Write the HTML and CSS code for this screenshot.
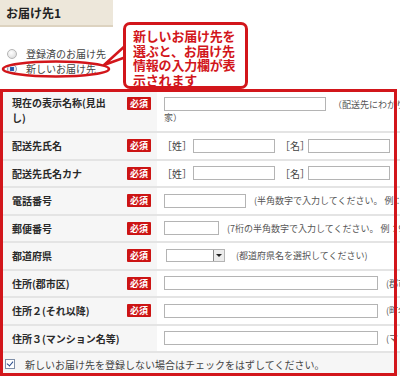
FILE: index.html
```html
<!DOCTYPE html>
<html lang="ja">
<head>
<meta charset="utf-8">
<link rel="stylesheet" href="styles.css">
</head>
<body>
<div class="page">
  <div class="sec-title">お届け先1</div>
  <ul class="choices">
    <li><span class="radio"></span>登録済のお届け先</li>
    <li><span class="radio on"></span>新しいお届け先</li>
  </ul>

  <div class="form">
    <div class="row r1">
      <div class="lab"><span class="ltxt">現在の表示名称(見出<br>し)</span><span class="req">必須</span></div>
      <div class="val val-wrap">
        <div class="line"><span class="inp w162"></span><span class="hint">（配送先にわかりやすい名称をつけてください。例：実</span></div>
        <div class="line hint">家）</div>
      </div>
    </div>
    <div class="row">
      <div class="lab"><span class="ltxt">配送先氏名</span><span class="req">必須</span></div>
      <div class="val"><span class="br">［姓］</span><span class="inp w82"></span><span class="br br2">［名］</span><span class="inp w82"></span></div>
    </div>
    <div class="row">
      <div class="lab"><span class="ltxt">配送先氏名カナ</span><span class="req">必須</span></div>
      <div class="val"><span class="br">［姓］</span><span class="inp w82"></span><span class="br br2">［名］</span><span class="inp w82"></span></div>
    </div>
    <div class="row">
      <div class="lab"><span class="ltxt">電話番号</span><span class="req">必須</span></div>
      <div class="val"><span class="inp w82"></span><span class="hint">(半角数字で入力してください。 例：0312345678)</span></div>
    </div>
    <div class="row">
      <div class="lab"><span class="ltxt">郵便番号</span><span class="req">必須</span></div>
      <div class="val"><span class="inp w55"></span><span class="hint">(7桁の半角数字で入力してください。 例：9999999)</span></div>
    </div>
    <div class="row">
      <div class="lab"><span class="ltxt">都道府県</span><span class="req">必須</span></div>
      <div class="val"><span class="sel"><span class="arrow"></span></span><span class="hint">(都道府県名を選択してください)</span></div>
    </div>
    <div class="row">
      <div class="lab"><span class="ltxt">住所(郡市区)</span><span class="req">必須</span></div>
      <div class="val"><span class="inp w214"></span><span class="hint">(郡市区)</span></div>
    </div>
    <div class="row">
      <div class="lab"><span class="ltxt">住所２(それ以降)</span><span class="req">必須</span></div>
      <div class="val"><span class="inp w214"></span><span class="hint">(町名)</span></div>
    </div>
    <div class="row">
      <div class="lab"><span class="ltxt">住所３(マンション名等)</span></div>
      <div class="val"><span class="inp w214"></span><span class="hint">(マ</span></div>
    </div>
    <div class="foot"><span class="check"></span>新しいお届け先を登録しない場合はチェックをはずしてください。</div>
  </div>

  <svg class="marks" width="400" height="379" viewBox="0 0 400 379">
    <ellipse cx="56" cy="69" rx="53" ry="7.5" fill="none" stroke="#d2161b" stroke-width="2.5"/>
    <polygon points="126,45 104,65 126,57" fill="#fff" stroke="#d2161b" stroke-width="2.5" stroke-linejoin="round"/>
  </svg>
  <div class="callout">新しいお届け先を<br>選ぶと、お届け先<br>情報の入力欄が表<br>示されます</div>
  <div class="redbox"></div>
</div>
</body>
</html>
```

FILE: styles.css
```css
html, body {
  margin: 0;
  padding: 0;
  background: #fff;
}
body {
  font-family: "Noto Sans CJK JP", "Noto Sans", sans-serif;
  color: #333;
  width: 400px;
  height: 379px;
  overflow: hidden;
}
.page {
  position: relative;
  width: 400px;
  height: 379px;
  overflow: hidden;
}
.sec-title {
  width: 107px;
  height: 25px;
  padding-left: 6px;
  background: #ede7da;
  border-bottom: 2px solid #ddd3c0;
  font-size: 12px;
  font-weight: bold;
  line-height: 25px;
  color: #222;
}
.choices {
  list-style: none;
  margin: 19px 0 0;
  padding: 0;
}
.choices li {
  display: flex;
  align-items: center;
  height: 15px;
  font-size: 10px;
  color: #444;
}
.radio {
  width: 8px;
  height: 8px;
  margin: 0 9px 0 7px;
  border-radius: 50%;
  border: 1px solid #b5b5b5;
  background: radial-gradient(circle at 40% 35%, #fff 0%, #e6e6e6 60%, #cfcfcf 100%);
  box-sizing: content-box;
  flex: none;
}
.radio.on {
  background: radial-gradient(circle, #1f4f9a 0%, #2d62b6 38%, #e8eef6 45%, #dde4ee 100%);
  border-color: #8a9bb5;
}
.form {
  margin-top: 15px;
  width: 470px;
}
.row {
  display: flex;
  height: 25.5px;
  border-bottom: 2px solid #e4e4e4;
}
.row.r1 {
  height: 40px;
}
.lab {
  flex: none;
  width: 139px;
  padding-left: 12px;
  padding-right: 6px;
  background: #f6f6f6;
  display: flex;
  align-items: center;
  justify-content: space-between;
  font-size: 10px;
  line-height: 15px;
  color: #2a2a2a;
  font-weight: bold;
}
.ltxt {
  white-space: nowrap;
}
.r1 .lab {
  align-items: flex-start;
  padding-top: 4px;
}
.req {
  background: #cc1414;
  color: #fff;
  font-size: 9px;
  font-weight: bold;
  width: 24px;
  height: 13px;
  line-height: 13px;
  text-align: center;
  border-radius: 1px;
  flex: none;
}
.r1 .req {
  margin-top: 2px;
}
.val {
  flex: 1;
  display: flex;
  align-items: center;
  padding-left: 7px;
  background: #fff;
  white-space: nowrap;
}
.val-wrap {
  flex-direction: column;
  align-items: flex-start;
  justify-content: flex-start;
  padding-top: 6px;
}
.line {
  display: flex;
  align-items: center;
  height: 14px;
}
.line.hint {
  margin-left: 0;
  height: 14px;
  line-height: 14px;
}
.inp {
  display: inline-block;
  height: 14px;
  border: 1px solid #b4b4b4;
  box-sizing: border-box;
  background: #fff;
  flex: none;
}
.w162 { width: 162px; }
.w82 { width: 82px; }
.w55 { width: 55px; }
.w214 { width: 214px; }
.hint {
  font-size: 9px;
  color: #555;
  margin-left: 8px;
}
.val-wrap .line .hint {
  margin-left: 7px;
}
.br {
  font-size: 10px;
  color: #444;
  margin: 0 1px 0 -2px;
}
.br2 {
  margin-left: 5px;
  margin-right: -2px;
}
.sel {
  position: relative;
  display: inline-block;
  width: 59px;
  height: 13px;
  margin-left: 2px;
  border: 1px solid #b4b4b4;
  box-sizing: border-box;
  background: #fff;
  flex: none;
}
.arrow {
  position: absolute;
  right: 0;
  top: 0;
  width: 11px;
  height: 11px;
  border-left: 1px solid #888;
  background: #ececec;
  box-sizing: border-box;
}
.arrow::after {
  content: "";
  position: absolute;
  left: 2px;
  top: 4px;
  border-left: 3px solid transparent;
  border-right: 3px solid transparent;
  border-top: 3px solid #222;
}
.sel + .hint {
  margin-left: 11px;
}
.foot {
  display: flex;
  align-items: center;
  height: 22px;
  background: #f6f6f6;
  font-size: 10px;
  color: #444;
}
.check {
  position: relative;
  width: 8px;
  height: 8px;
  margin: 0 10px 0 5px;
  border: 1px solid #7f8fa8;
  background: #fff;
  flex: none;
}
.check::after {
  content: "";
  position: absolute;
  left: 2px;
  top: 0px;
  width: 3px;
  height: 5px;
  border-right: 1.5px solid #2a4c8c;
  border-bottom: 1.5px solid #2a4c8c;
  transform: rotate(40deg);
}
.marks {
  position: absolute;
  left: 0;
  top: 0;
  pointer-events: none;
}
.callout {
  position: absolute;
  left: 123px;
  top: 22px;
  width: 125px;
  height: 67px;
  box-sizing: border-box;
  padding: 4px 0 0 7px;
  border: 3px solid #d2161b;
  border-radius: 7px;
  background: #fff;
  color: #d2161b;
  font-size: 13px;
  font-weight: bold;
  line-height: 14.5px;
  letter-spacing: -0.2px;
  white-space: nowrap;
}
.redbox {
  position: absolute;
  left: 0;
  top: 89px;
  width: 397px;
  height: 287px;
  box-sizing: border-box;
  border: 3px solid #d2161b;
}
```
